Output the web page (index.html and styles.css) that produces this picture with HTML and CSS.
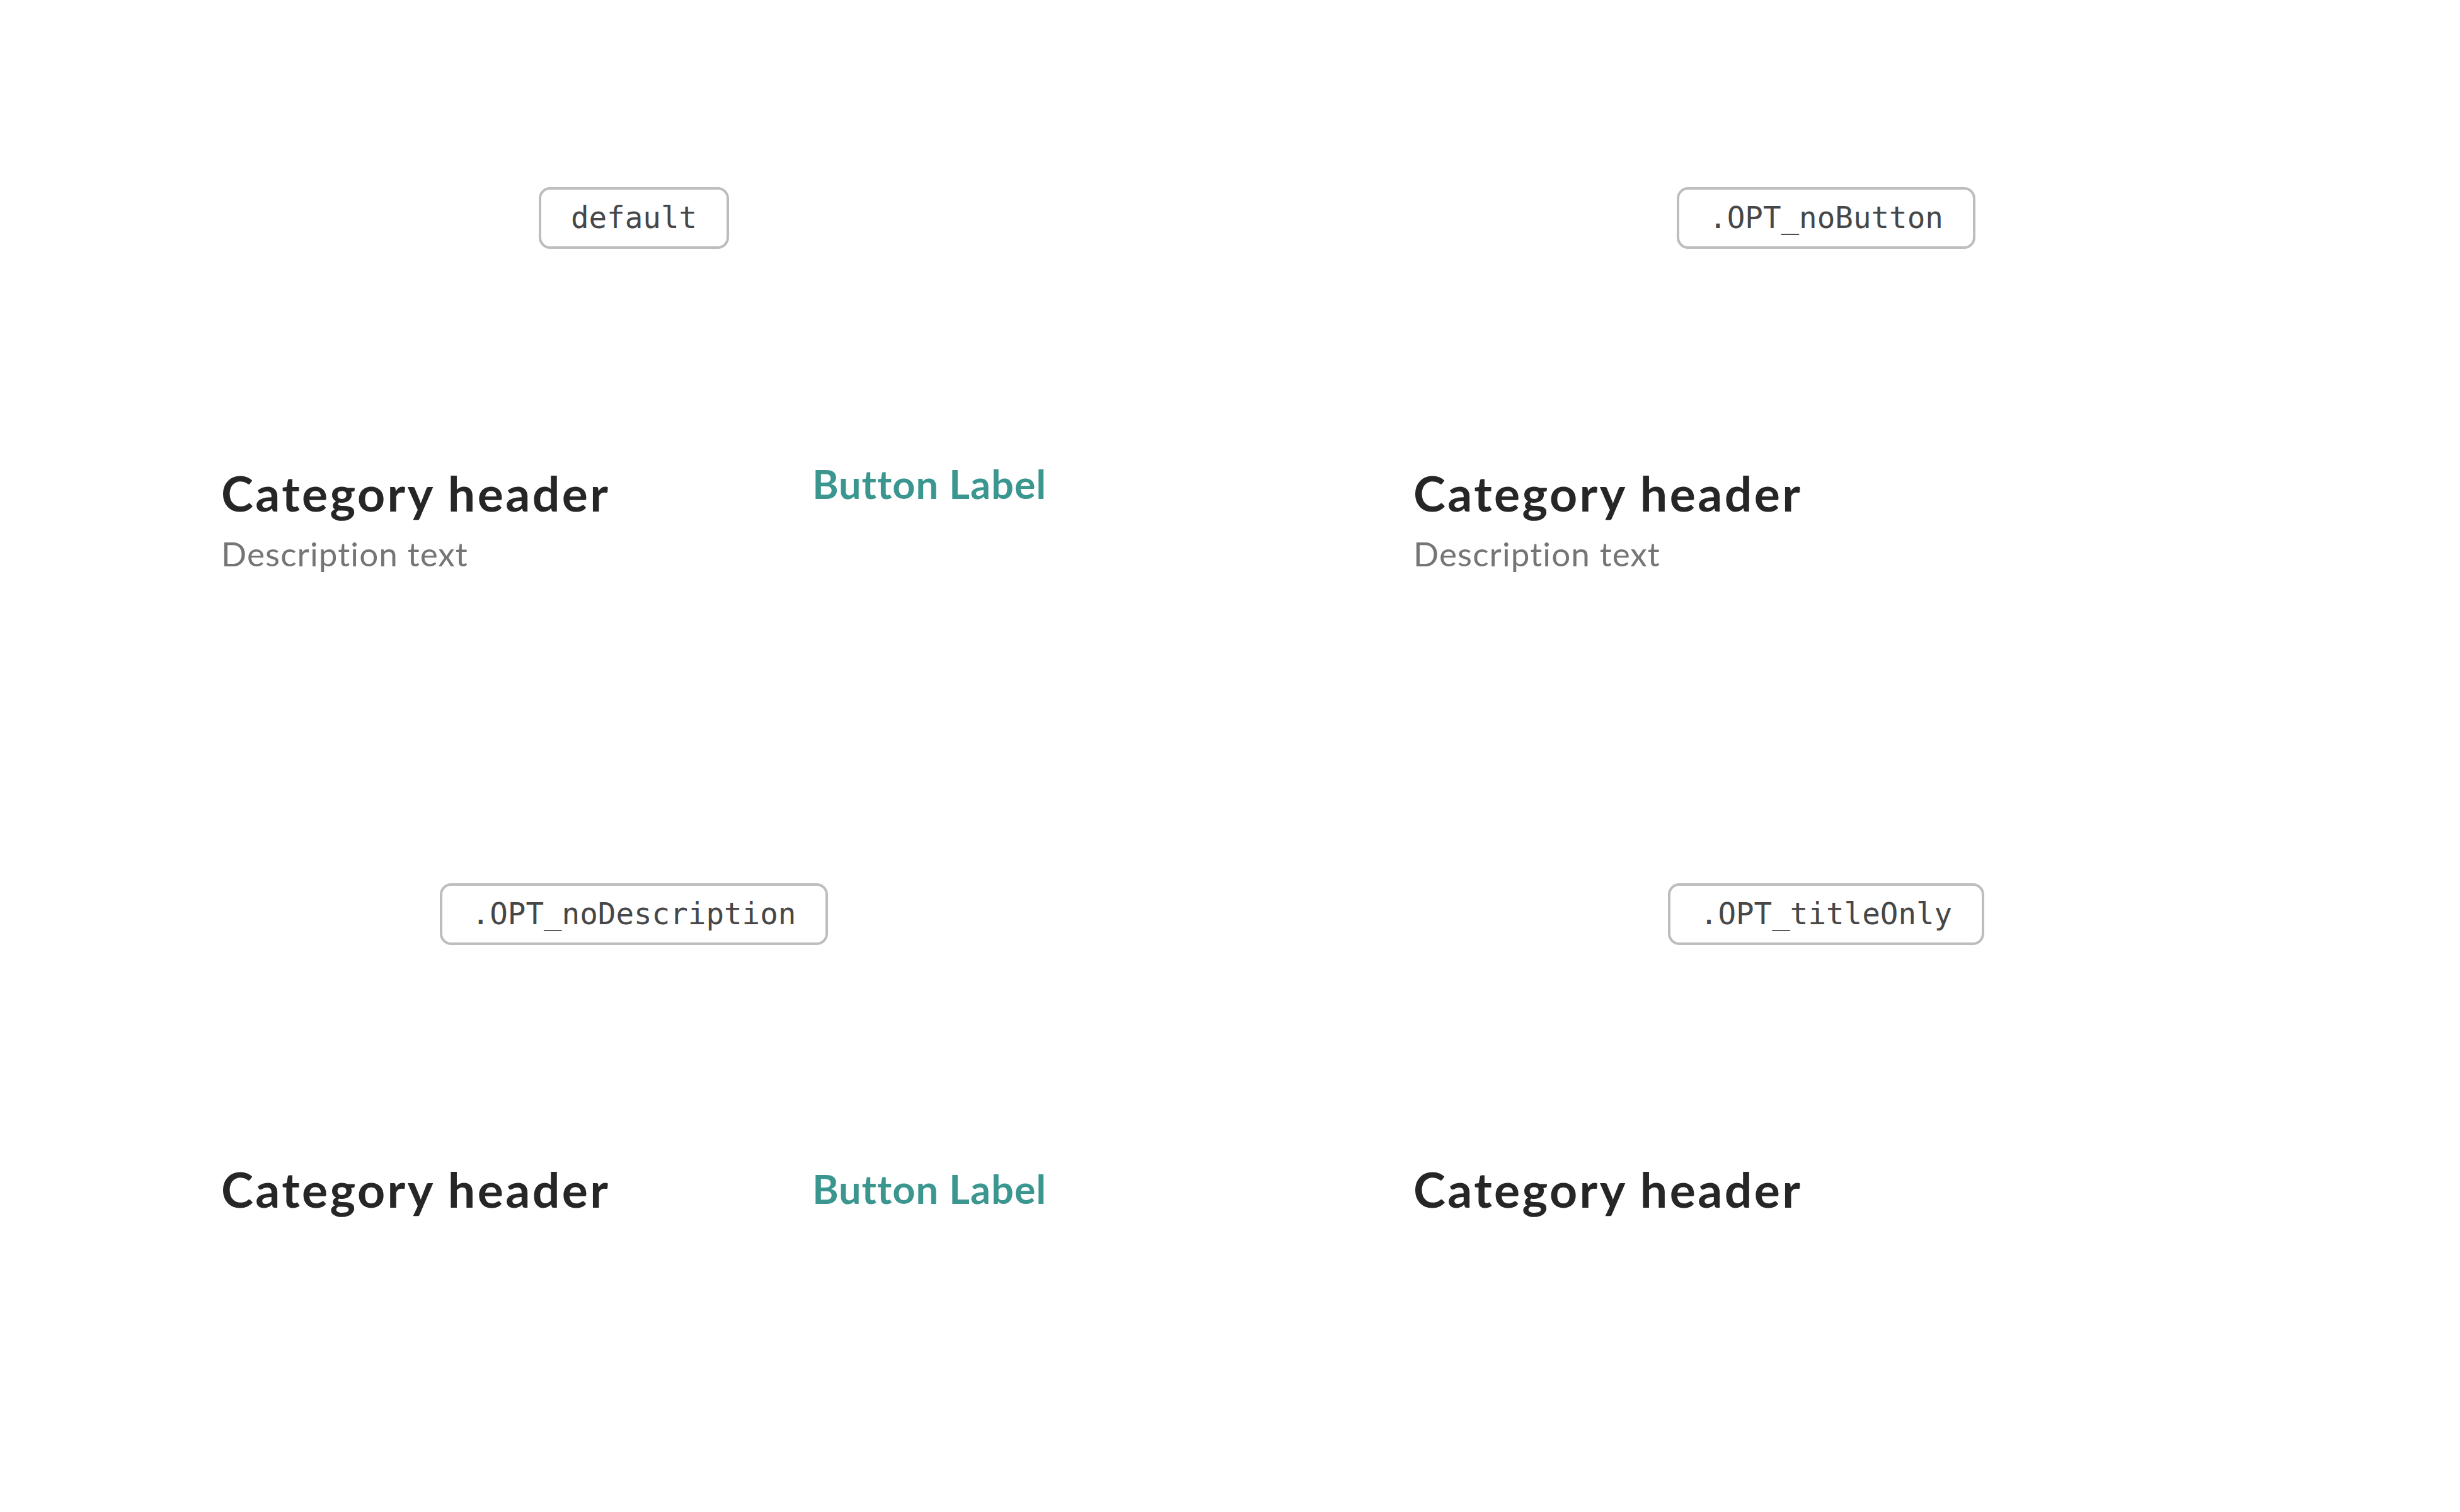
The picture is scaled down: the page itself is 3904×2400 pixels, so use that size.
FILE: index.html
```html
<!DOCTYPE html>
<html lang="en">
<head>
  <meta charset="UTF-8" />
  <title>Category header – variants</title>
  <link rel="stylesheet" href="styles.css">
</head>
<body>
  <div class="sheet">
    <div class="variant">
      <div class="tag">default</div>
      <div class="category">
        <div class="category-text">
          <h2>Category header</h2>
          <p class="description">Description text</p>
        </div>
        <button class="text-button">Button Label</button>
      </div>
    </div>

    <div class="variant">
      <div class="tag">.OPT_noButton</div>
      <div class="category">
        <div class="category-text">
          <h2>Category header</h2>
          <p class="description">Description text</p>
        </div>
      </div>
    </div>

    <div class="variant">
      <div class="tag">.OPT_noDescription</div>
      <div class="category no-description">
        <div class="category-text">
          <h2>Category header</h2>
        </div>
        <button class="text-button">Button Label</button>
      </div>
    </div>

    <div class="variant">
      <div class="tag">.OPT_titleOnly</div>
      <div class="category no-description">
        <div class="category-text">
          <h2>Category header</h2>
        </div>
      </div>
    </div>
  </div>
</body>
</html>
```

FILE: styles.css
```css
body {
  margin: 0;
  background: #fff;
  font-family: "Lato", "Noto Sans", sans-serif;
  font-variant-ligatures: none;
}
.sheet {
  display: grid;
  grid-template-columns: 1310px 1310px;
  grid-auto-rows: 1105px;
  column-gap: 582px;
  padding: 297px 351px 0;
}
.variant {
  display: flex;
  flex-direction: column;
}
.tag {
  align-self: center;
  border: 4px solid #bdbdbd;
  border-radius: 18px;
  padding: 0 47px;
  line-height: 90px;
  font-family: "DejaVu Sans Mono", "Liberation Mono", monospace;
  font-size: 47.5px;
  color: #474747;
}
.category {
  display: flex;
  align-items: flex-start;
  margin-top: 341px;
}
.category.no-description {
  align-items: center;
}
.category-text {
  flex: 1;
}
h2 {
  margin: 0;
  font-size: 77px;
  font-weight: 700;
  line-height: 1.2;
  letter-spacing: 3.4px;
  color: #262626;
}
.description {
  margin: 19px 0 0;
  font-size: 53px;
  line-height: 1.2;
  letter-spacing: 1.1px;
  color: #757575;
}
.text-button {
  margin-top: -6px;
  padding: 0;
  border: 0;
  background: none;
  font-family: inherit;
  font-size: 63px;
  font-weight: 700;
  line-height: 1.2;
  letter-spacing: 1px;
  color: #3a968e;
}
.no-description .text-button {
  margin-top: 0;
}
```
